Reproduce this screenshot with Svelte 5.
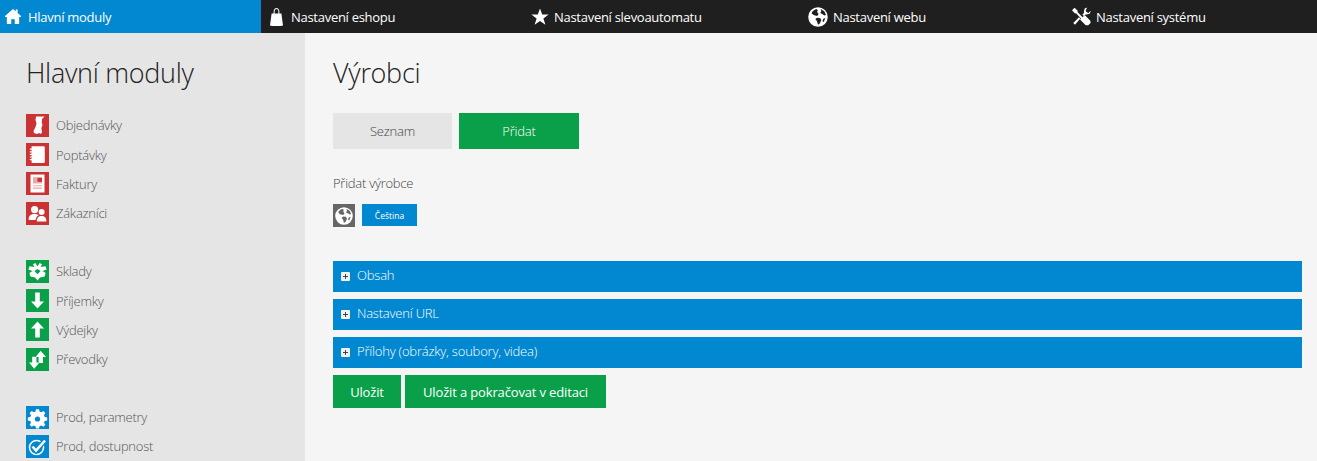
<script>
  const tabs = [
    { label: 'Nastavení eshopu', icon: 'bag', box: '2 0 16 18', width: 16, height: 18 },
    { label: 'Nastavení slevoautomatu', icon: 'star', box: '0 0 18 18', width: 18, height: 18 },
    { label: 'Nastavení webu', icon: 'globe', box: '0 0 18 18', width: 20, height: 20 },
    { label: 'Nastavení systému', icon: 'tools', box: '0 0 18 18', width: 19, height: 19 }
  ]

  const groups = [
    {
      color: 'red',
      items: [
        { label: 'Objednávky', icon: 'receipt' },
        { label: 'Poptávky', icon: 'notebook' },
        { label: 'Faktury', icon: 'invoice' },
        { label: 'Zákazníci', icon: 'users' }
      ]
    },
    {
      color: 'green',
      items: [
        { label: 'Sklady', icon: 'box' },
        { label: 'Příjemky', icon: 'down' },
        { label: 'Výdejky', icon: 'up' },
        { label: 'Převodky', icon: 'swap' }
      ]
    },
    {
      color: 'blue',
      items: [
        { label: 'Prod, parametry', icon: 'gear' },
        { label: 'Prod, dostupnost', icon: 'check' }
      ]
    }
  ]

  const sections = ['Obsah', 'Nastavení URL', 'Přílohy (obrázky, soubory, videa)']

  const paths = {
    home: 'M9.5 0 12.8 2.8V.8H15V4.8L19 8.4V9.6H16.8V18H11.6V12.4H7.4V18H2.2V9.6H0V8.4Z',
    bag: 'M3.6 5.6H5.6V4C5.6 1.2 7 0 8.5 0S11.4 1.2 11.4 4V5.6H13.4L15 17.4C13 18.2 4 18.2 2 17.4ZM6.6 5.6H10.4V4C10.4 2 9.6 1 8.5 1S6.6 2 6.6 4Z',
    star: 'M9 .5 11.2 6.6H17.6L12.4 10.4 14.4 16.8 9 13 3.6 16.8 5.6 10.4.4 6.6H6.8Z',
    globe: 'M9 .2A8.8 8.8 0 1 0 9 17.8 8.8 8.8 0 0 0 9 .2ZM5.6 2.6 7.6 1.9 8.8 3 8.2 4.6 9.6 6.2 8.2 8 5.6 7.4 3.4 6 3.6 4.4ZM11.4 1.8 14.6 3.8 16.2 7 14.8 7.6 12.8 6.2 11 5.4 12 3.8ZM8 9.6 10.8 9.8 12 11.8 10.6 14.8 9 16 8 12.6 6.6 11ZM13.8 10.6 15.6 10 14.2 13.4 13 12.8Z',
    tools: 'M2.4 .6 5.2 3.4 5.4 5 10 9.6 12 7.6 17.4 13 17.6 15.2 15.4 17.4 13 17.2 7.6 11.8 8.6 10.8 4 6.2 2.6 6 0 3ZM14.4.4 12 1.4 11.2 4.4 11.4 5.6 9.8 7.2 11.2 8.6 12.8 7 14 7.2 17 6.2 17.8 3.6 15.6 5.6 13.4 4.6 13 3.4ZM6.6 9.6 8 11 2.8 16.8 1.2 15.2Z',
    receipt: 'M10 2.5H18.5L16 5 15.8 8.5 16.5 11 15.4 14 16 18 15 20 13 19 11 20 8 19 7.5 17 9.5 13 10.5 9.5 9.5 6Z',
    notebook: 'M5.6 3.2H17.6Q18.8 3.2 18.8 4.4V18.8Q18.8 20 17.6 20H5.6ZM3.8 5.6H5.6V6.8H3.8ZM3.8 8.2H5.6V9.4H3.8ZM3.8 10.8H5.6V12H3.8ZM3.8 13.4H5.6V14.6H3.8ZM3.8 16H5.6V17.2H3.8Z',
    invoice: 'M4.5 2.6H18.5V20.4H4.5ZM7 5.4V11.6H16V5.4ZM7 13.2V14.2H16V13.2ZM7 15.6V16.6H16V15.6Z',
    users: 'M8.6 4A3.6 3.6 0 1 1 8.6 11.2 3.6 3.6 0 0 1 8.6 4ZM15.6 7A3 3 0 1 1 15.6 13 3 3 0 0 1 15.6 7ZM2.6 17.6C2.6 13.6 5 12 8.6 12 10.4 12 11.8 12.4 12.8 13.2 10.8 14.2 9.8 15.8 9.6 18H3ZM10.8 19.4C10.8 15.6 12.6 14 15.6 14S20.4 15.6 20.4 19.4Z',
    box: 'M9.4 3 11.5 6.6 13.6 3 16 4.2 14.6 7 19.6 6.2 20.6 9.4 16.6 11 19.6 13 18.6 16.4 14 17.6 11.5 20.4 9 17.6 4.4 16.4 3.4 13 6.4 11 2.4 9.4 3.4 6.2 8.4 7 7 4.2ZM11.5 9 8.4 11 11.5 14.2 14.6 11Z',
    down: 'M9.2 3.6H13.8V12.4H18L11.5 19.6 5 12.4H9.2Z',
    up: 'M11.5 3.4 18 10.6H13.8V19.4H9.2V10.6H5Z',
    swap: 'M14.6 2.8 20 9H17V15H12.6V9H9.6ZM6.2 8.8H10.4V14.6H13.4L8.2 20.8 3 14.6H6.2Z',
    gear: 'M10 3.2H13L13.5 5.6 15.2 6.3 17.3 5 19.4 7.1 18 9.2 18.7 10.9 21.2 11.5V14.4L18.7 15 18 16.7 19.4 18.8 17.3 20.8 15.2 19.5 13.5 20.2 13 22.6H10L9.5 20.2 7.8 19.5 5.7 20.8 3.6 18.8 5 16.7 4.3 15 1.8 14.4V11.5L4.3 10.9 5 9.2 3.6 7.1 5.7 5 7.8 6.3 9.5 5.6ZM11.5 10.4A2.6 2.6 0 1 0 11.5 15.6 2.6 2.6 0 0 0 11.5 10.4Z'
  }
</script>

<div class="page">
  <nav class="topbar">
    <a class="tab home" href="#home">
      <svg viewBox="0 0 19 18" width="16" height="17" aria-hidden="true"><path d={paths.home} fill="#fff" /></svg>
      Hlavní moduly
    </a>
    {#each tabs as tab}
      <a class="tab" href="#tab">
        <svg viewBox={tab.box} width={tab.width} height={tab.height} aria-hidden="true"><path d={paths[tab.icon]} fill="#fff" fill-rule="evenodd" /></svg>
        {tab.label}
      </a>
    {/each}
  </nav>

  <div class="body">
    <aside class="sidebar">
      <h2>Hlavní moduly</h2>
      {#each groups as group}
        <ul class="group">
          {#each group.items as item}
            <li>
              <span class="tile {group.color}">
                {#if item.icon === 'check'}
                  <svg viewBox="0 0 23 23" width="23" height="23" aria-hidden="true">
                    <circle cx="10.5" cy="12.5" r="7" fill="none" stroke="#fff" stroke-width="1.6" />
                    <path d="M6.5 11.5 10 15.5 19 5.5" fill="none" stroke="#0288d1" stroke-width="5" />
                    <path d="M6.5 11.5 10 15.5 19 5.5" fill="none" stroke="#fff" stroke-width="2.6" />
                  </svg>
                {:else}
                  <svg viewBox="0 0 23 23" width="23" height="23" aria-hidden="true">
                    {#if item.icon === 'invoice'}
                      <rect x="7" y="5.4" width="9" height="11.2" fill="#eda9a9" />
                      <rect x="11.5" y="5.4" width="4.5" height="4.4" fill="#cb3234" />
                    {/if}
                    <path d={paths[item.icon]} fill="#fff" fill-rule="evenodd" />
                  </svg>
                {/if}
              </span>
              {item.label}
            </li>
          {/each}
        </ul>
      {/each}
    </aside>

    <main class="content">
      <h1>Výrobci</h1>
      <div class="switch">
        <button class="list">Seznam</button>
        <button class="add">Přidat</button>
      </div>
      <p class="subtitle">Přidat výrobce</p>
      <div class="lang">
        <span class="lang-icon">
          <svg viewBox="0 0 18 18" width="18" height="18" aria-hidden="true"><path d={paths.globe} fill="#fff" fill-rule="evenodd" /></svg>
        </span>
        <button class="lang-btn">Čeština</button>
      </div>
      <div class="sections">
        {#each sections as section}
          <div class="section">
            <span class="plus"></span>
            {section}
          </div>
        {/each}
      </div>
      <div class="actions">
        <button class="save">Uložit</button>
        <button class="save-edit">Uložit a pokračovat v editaci</button>
      </div>
    </main>
  </div>
</div>

<style>
  :global(body) {
    margin: 0;
    overflow: hidden;
    font-family: "Open Sans", "Liberation Sans", sans-serif;
  }

  .page {
    height: 461px;
    overflow: hidden;
    display: flex;
    flex-direction: column;
    background: #f5f5f5;
  }

  .topbar {
    height: 33px;
    flex: none;
    display: grid;
    grid-template-columns: 261px 261px 277px 264px 254px;
    background: #1f1f1f;
  }

  .tab {
    display: flex;
    align-items: center;
    gap: 5px;
    padding-left: 9px;
    color: #fff;
    font-size: 13px;
    letter-spacing: -0.28px;
    text-decoration: none;
  }

  .tab.home {
    background: #0288d1;
    padding-left: 5px;
    gap: 7px;
  }

  .body {
    flex: 1;
    display: flex;
    min-height: 0;
  }

  .sidebar {
    width: 305px;
    flex: none;
    box-sizing: border-box;
    padding: 0 27px;
    background: #e5e5e5;
  }

  h2 {
    margin: 22px 0 19.5px -1px;
    height: 36px;
    font-size: 27px;
    line-height: 36px;
    font-weight: 300;
    letter-spacing: -0.3px;
    color: #222;
  }

  .group {
    list-style: none;
    margin: 0 0 28.4px;
    padding: 0;
  }

  .group li {
    display: flex;
    align-items: center;
    gap: 7px;
    height: 29.4px;
    color: #555;
    font-size: 13px;
    letter-spacing: -0.25px;
    font-weight: 300;
  }

  .tile {
    width: 23px;
    height: 23px;
    flex: none;
    margin-left: -1px;
  }

  .tile svg {
    display: block;
  }

  .red { background: #cb3234; }
  .green { background: #0aa04a; }
  .blue { background: #0288d1; }

  .content {
    flex: 1;
    padding: 0 15px 0 28px;
  }

  h1 {
    margin: 23px 0 24px;
    height: 33px;
    font-size: 27px;
    line-height: 33px;
    letter-spacing: -0.3px;
    font-weight: 300;
    color: #222;
  }

  button {
    border: 0;
    padding: 0;
    font-family: inherit;
    cursor: pointer;
  }

  .switch {
    display: flex;
    gap: 7px;
  }

  .switch button {
    height: 36px;
    font-size: 13px;
    letter-spacing: -0.2px;
    font-weight: 300;
  }

  .list {
    width: 119px;
    background: #e5e5e5;
    color: #444;
  }

  .add {
    width: 120px;
    background: #0aa04a;
    color: #fff;
  }

  .subtitle {
    margin: 25px 0 12px;
    height: 18px;
    line-height: 18px;
    font-size: 13px;
    letter-spacing: -0.25px;
    font-weight: 300;
    color: #444;
  }

  .lang {
    display: flex;
    gap: 7px;
  }

  .lang-icon {
    width: 22px;
    height: 23px;
    display: flex;
    align-items: center;
    justify-content: center;
    background: #666;
  }

  .lang-btn {
    width: 55px;
    height: 22px;
    background: #0288d1;
    color: #fff;
    font-size: 8.5px;
  }

  .sections {
    margin-top: 34px;
    display: flex;
    flex-direction: column;
    gap: 7px;
  }

  .section {
    height: 31px;
    display: flex;
    align-items: center;
    gap: 7px;
    padding: 0 0 4px 8px;
    box-sizing: border-box;
    background: #0288d1;
    color: #fff;
    font-size: 13px;
    letter-spacing: -0.2px;
    font-weight: 300;
  }

  .plus {
    width: 9px;
    height: 9px;
    border-radius: 1px;
    background:
      linear-gradient(#444, #444) center / 5px 1px no-repeat,
      linear-gradient(#444, #444) center / 1px 5px no-repeat,
      #f2f2f2;
    margin-top: 4px;
  }

  .actions {
    margin-top: 7px;
    display: flex;
    gap: 4px;
  }

  .actions button {
    height: 33px;
    background: #0aa04a;
    color: #fff;
    font-size: 13px;
    letter-spacing: -0.15px;
  }

  .save {
    width: 68px;
  }

  .save-edit {
    width: 201px;
  }
</style>
